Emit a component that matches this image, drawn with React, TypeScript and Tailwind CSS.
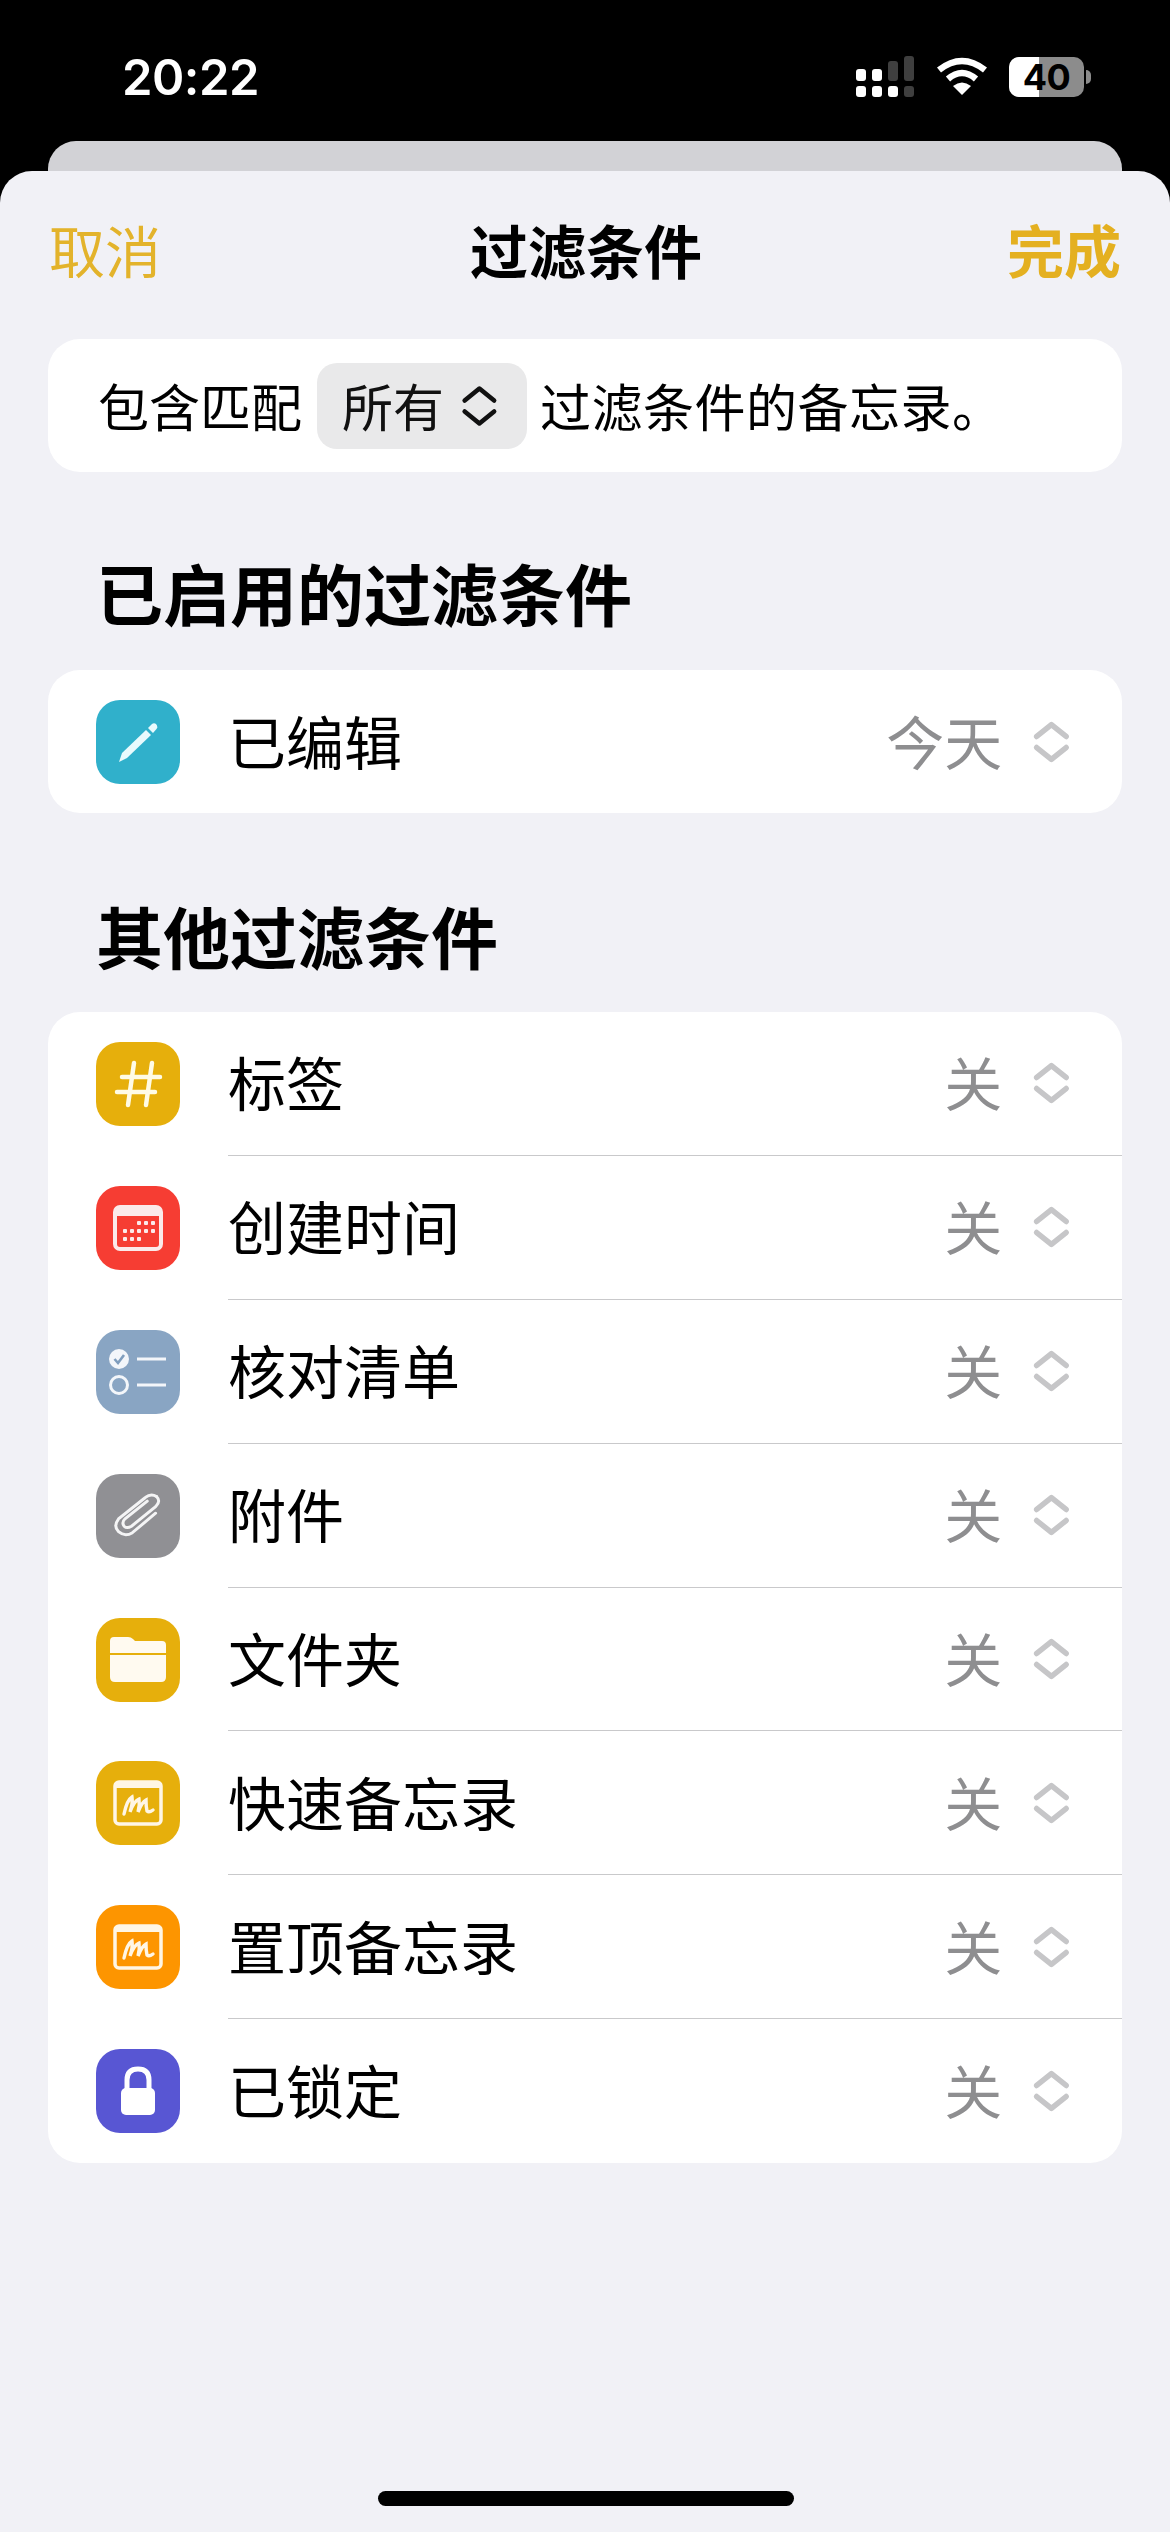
import React from "react";

const CJK = "font-['Noto_Sans_CJK_SC','Noto_Sans',sans-serif]";

function Updown({ color, size = 48, width = 6 }: { color: string; size?: number; width?: number }) {
  return (
    <svg width={size * 0.8} height={size} viewBox="0 0 40 50" fill="none" stroke={color} strokeWidth={width} strokeLinecap="round" strokeLinejoin="round">
      <path d="M4 19 L20 6 L36 19" />
      <path d="M4 31 L20 44 L36 31" />
    </svg>
  );
}

function IconBox({ bg, children }: { bg: string; children: React.ReactNode }) {
  return (
    <div className="w-[84px] h-[84px] rounded-[24px] flex items-center justify-center shrink-0" style={{ background: bg }}>
      {children}
    </div>
  );
}

const Pencil = () => (
  <svg width="40" height="42" viewBox="0 0 40 42">
    <path d="M1 41 L4 32 L28 9 L33 14 L9 37 Z" fill="#e9fafd" />
    <path d="M30 7 L34 3 Q36 1.5 38 3 L39 4.5 Q40 6.5 38.5 8 L35 12 Z" fill="#e9fafd" />
  </svg>
);
const Hash = () => (
  <svg width="50" height="50" viewBox="0 0 50 50" stroke="#fffbe6" strokeWidth="4.5" strokeLinecap="round" fill="none">
    <path d="M21 4 L15 46 M39 4 L33 46 M9 18 H47 M4 33 H42" />
  </svg>
);
const Calendar = () => (
  <svg width="50" height="46" viewBox="0 0 50 46">
    <rect x="2" y="2" width="46" height="42" rx="5" fill="none" stroke="#fbeaea" strokeWidth="4" />
    <rect x="2" y="2" width="46" height="9" fill="#fbeaea" />
    {[[24, 16], [31, 16], [38, 16], [10, 24], [17, 24], [24, 24], [31, 24], [38, 24], [10, 32], [17, 32], [24, 32]].map(([x, y], i) => (
      <rect key={i} x={x} y={y} width="4" height="4" rx="1" fill="#fbeaea" />
    ))}
  </svg>
);
const Checklist = () => (
  <svg width="58" height="46" viewBox="0 0 58 46" fill="none">
    <circle cx="10" cy="10" r="10" fill="#f3f6fa" />
    <path d="M5.5 10 L9 14 L15 6" stroke="#7f9dbd" strokeWidth="2.6" />
    <circle cx="10" cy="36" r="8.5" stroke="#f3f6fa" strokeWidth="3" />
    <path d="M28 10 H57 M28 36 H57" stroke="#f3f6fa" strokeWidth="2.8" />
  </svg>
);
const Clip = () => (
  <svg width="50" height="52" viewBox="0 0 54 54" fill="none" stroke="#f4f4f5" strokeWidth="3.2" strokeLinecap="round">
    <path d="M47 6 Q41 2 35 7 L6 30 Q0 38 6 44 Q13 50 21 45 L46 24" />
    <path d="M47 6 Q52 11 46 17 L20 38 Q15 41 12 38 Q9 34 13 30 L37 11" />
  </svg>
);
const Folder = () => (
  <svg width="58" height="47" viewBox="0 0 58 47">
    <path d="M1 5 Q1 1 5 1 H19 Q22 1 24 3 L26 5 H53 Q57 5 57 9 V17 H1 Z" fill="#fffaf0" />
    <path d="M1 19 H57 V41 Q57 46 52 46 H6 Q1 46 1 41 Z" fill="#fffaf0" />
  </svg>
);
const Note = () => (
  <svg width="50" height="46" viewBox="0 0 50 46" fill="none">
    <rect x="2" y="2" width="46" height="42" rx="4" stroke="#fff6e5" strokeWidth="3.5" />
    <rect x="2" y="2" width="46" height="6" fill="#fff6e5" />
    <path d="M11 34 Q14 20 19 17 Q20 23 17 32 Q21 21 26 19 Q27 25 25 32 Q29 22 33 20 Q33 27 34 31 Q36 33 40 30" stroke="#fff6e5" strokeWidth="3.4" strokeLinecap="round" />
  </svg>
);
const Lock = () => (
  <svg width="36" height="50" viewBox="0 0 36 50">
    <path d="M7 24 V14 Q7 3 18 3 Q29 3 29 14 V24" fill="none" stroke="#fff" strokeWidth="5" />
    <rect x="1" y="22" width="34" height="27" rx="5" fill="#fff" />
  </svg>
);

function Row({ icon, label, value, sep }: { icon: React.ReactNode; label: string; value: string; sep?: boolean }) {
  return (
    <div className="flex items-center h-[143.9px] pl-[48px]">
      {icon}
      <div className={`flex-1 h-full ml-[48px] flex items-center pr-[52px] ${sep ? "border-b border-[#c9c9cb]" : ""}`}>
        <span className="flex-1 text-[58px] leading-none text-black pb-[4px]">{label}</span>
        <span className="text-[58px] leading-none text-[#8e8e90] pb-[4px]">{value}</span>
        <div className="ml-[31px] flex items-center">
          <Updown color="#c6c6c8" size={46} width={6} />
        </div>
      </div>
    </div>
  );
}

const rows = [
  { icon: <IconBox bg="#e6af0c"><Hash /></IconBox>, label: "标签" },
  { icon: <IconBox bg="#f63d33"><Calendar /></IconBox>, label: "创建时间" },
  { icon: <IconBox bg="#89a5c3"><Checklist /></IconBox>, label: "核对清单" },
  { icon: <IconBox bg="#909094"><Clip /></IconBox>, label: "附件" },
  { icon: <IconBox bg="#e6af0c"><Folder /></IconBox>, label: "文件夹" },
  { icon: <IconBox bg="#e6af0c"><Note /></IconBox>, label: "快速备忘录" },
  { icon: <IconBox bg="#fd9500"><Note /></IconBox>, label: "置顶备忘录" },
  { icon: <IconBox bg="#5856d3"><Lock /></IconBox>, label: "已锁定" },
];

function StatusIcons() {
  const w = "#ffffff";
  const d = "#3f3f3f";
  return (
    <div className="flex items-center">
      <svg width="60" height="42" viewBox="0 0 60 42">
        <rect x="0" y="13" width="10" height="12" rx="3" fill={w} />
        <rect x="16" y="13" width="10" height="12" rx="3" fill={w} />
        <rect x="32" y="5" width="10" height="20" rx="3" fill={d} />
        <rect x="48" y="0" width="10" height="25" rx="3" fill={d} />
        <rect x="0" y="30" width="10" height="11" rx="3" fill={w} />
        <rect x="16" y="30" width="10" height="11" rx="3" fill={w} />
        <rect x="32" y="30" width="10" height="11" rx="3" fill={w} />
        <rect x="48" y="30" width="10" height="11" rx="3" fill={d} />
      </svg>
      <svg className="ml-[21px]" width="50" height="40" viewBox="0 0 50 40" fill="none" stroke="#fff" strokeWidth="6.5">
        <path d="M2 13 Q25 -5 48 13" />
        <path d="M11 22 Q25 10 39 22" />
        <path d="M25 38 L16 29 Q25 22 34 29 Z" fill="#fff" stroke="none" />
      </svg>
      <div className="relative ml-[22px] w-[75px] h-[40px] rounded-[10px] bg-[#8c8c8c] flex items-center justify-center">
        <div className="absolute left-0 top-0 bottom-0 w-[30px] rounded-l-[10px] bg-white" />
        <span className="relative font-['Inter',sans-serif] font-bold text-[36px] leading-[40px] text-black tracking-[-0.5px]">40</span>
      </div>
      <div className="ml-[2px] w-[5px] h-[14px] rounded-r-full bg-[#8c8c8c]" />
    </div>
  );
}

export default function App() {
  return (
    <div className={`w-[1170px] h-[2532px] bg-black flex flex-col overflow-hidden ${CJK}`}>
      <div className="h-[141px] shrink-0 flex items-start justify-between pl-[122px] pr-[79px] pt-[49px]">
        <span className="font-['Inter',sans-serif] font-semibold text-[49px] leading-[58px] text-white tracking-[-0.5px]">20:22</span>
        <div className="pt-[7px]"><StatusIcons /></div>
      </div>
      <div className="h-[30px] shrink-0 mx-[48px] rounded-t-[28px] bg-[#d2d2d6]" />
      <div className="flex-1 rounded-t-[32px] bg-[#f1f1f6] flex flex-col relative">
        <div className="h-[168px] shrink-0 flex items-center justify-between pl-[49px] pr-[49px] pb-[13px] relative">
          <span className="text-[56px] leading-none text-[#e3b32b]">取消</span>
          <span className="absolute left-[470px] text-[58px] leading-none font-bold text-black">过滤条件</span>
          <span className="text-[57px] leading-none font-bold text-[#e4b020]">完成</span>
        </div>

        <div className="mx-[48px] h-[133px] rounded-[32px] bg-white flex items-center pl-[50px] text-[51px] leading-none text-black">
          <span>包含匹配</span>
          <div className="ml-[15px] w-[210px] h-[86px] rounded-[20px] bg-[#e9e9ea] flex items-center pl-[25px]">
            <span className="text-[51px] leading-none text-[#111]">所有</span>
            <div className="ml-[17px] flex items-center"><Updown color="#111111" size={46} width={5} /></div>
          </div>
          <span className="ml-[13px] tracking-[0.5px]">过滤条件的备忘录。</span>
        </div>

        <div className="h-[198px] shrink-0 flex items-end pl-[96px] pb-[33px] text-[67px] leading-[90px] font-bold text-black">已启用的过滤条件</div>

        <div className="mx-[48px] h-[143px] rounded-[32px] bg-white overflow-hidden">
          <Row icon={<IconBox bg="#30b0cb"><Pencil /></IconBox>} label="已编辑" value="今天" />
        </div>

        <div className="h-[199px] shrink-0 flex items-end pl-[96px] pb-[32px] text-[67px] leading-[90px] font-bold text-black">其他过滤条件</div>

        <div className="mx-[48px] rounded-[32px] bg-white overflow-hidden">
          {rows.map((r, i) => (
            <Row key={r.label} icon={r.icon} label={r.label} value="关" sep={i < rows.length - 1} />
          ))}
        </div>

        <div className="absolute left-[378px] bottom-[26px] w-[416px] h-[15px] rounded-full bg-black" />
      </div>
    </div>
  );
}
